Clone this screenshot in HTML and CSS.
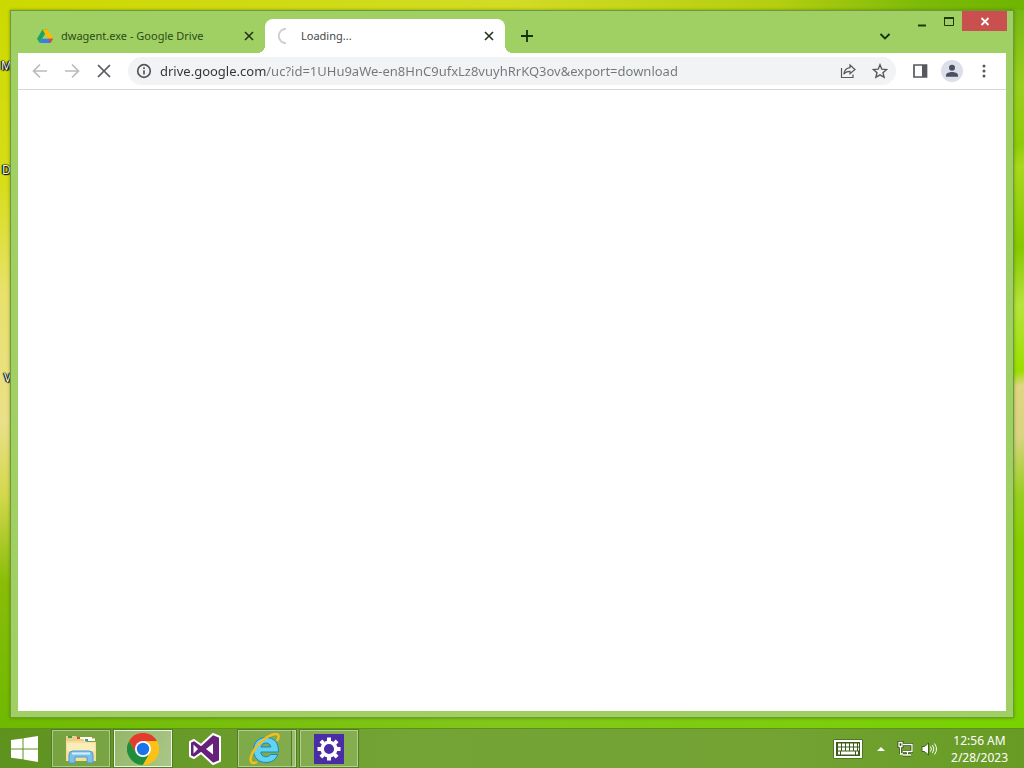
FILE: index.html
```
<!DOCTYPE html>
<html lang="en">
<head>
  <meta charset="UTF-8">
  <meta name="viewport" content="width=device-width, initial-scale=1.0">
  <title>Loading...</title>
  <link rel="stylesheet" href="styles.css">
</head>
<body>
  <main class="desktop">
    <span class="desktop-label label-one">M</span>
    <span class="desktop-label label-two">D</span>
    <span class="desktop-label label-three">V</span>

    <section class="window">
      <header class="title-bar">
        <div class="tab">
          <svg class="favicon" viewBox="0 0 16 16">
            <path d="M5.5 1.5h5L5.2 10.7 2.7 15 0 10.7z" fill="#1ea362"/>
            <path d="M5.5 1.5h5L16 10.7h-5z" fill="#ffba00"/>
            <path d="M2.7 15l2.5-4.3H16L13.4 15z" fill="#3b7de8"/>
            <path d="M13 10.7h3L13.4 15l-2-4.3z" fill="#ea4335"/>
          </svg>
          <span class="tab-title">dwagent.exe - Google Drive</span>
          <button class="tab-close" aria-label="Close tab">
            <svg viewBox="0 0 16 16"><path d="M4 4l8 8M12 4l-8 8"/></svg>
          </button>
        </div>
        <div class="tab tab-active">
          <svg class="favicon" viewBox="0 0 16 16">
            <path d="M9 .8A7.2 7.2 0 0 0 9 15.2" fill="none" stroke="#ccd0d4" stroke-width="2"/>
          </svg>
          <span class="tab-title">Loading...</span>
          <button class="tab-close" aria-label="Close tab">
            <svg viewBox="0 0 16 16"><path d="M4 4l8 8M12 4l-8 8"/></svg>
          </button>
        </div>
        <button class="new-tab" aria-label="New tab">
          <svg viewBox="0 0 16 16"><path d="M8 2v12M2 8h12"/></svg>
        </button>
        <button class="tab-search" aria-label="Search tabs">
          <svg viewBox="0 0 16 16"><path d="M3.5 6l4.5 4.5L12.500 6"/></svg>
        </button>
        <div class="window-buttons">
          <button aria-label="Minimize">
            <svg viewBox="0 0 16 16"><path d="M4 11.500h8v2H4z" fill="#1f3a0a"/></svg>
          </button>
          <button aria-label="Maximize">
            <svg viewBox="0 0 16 16"><path d="M3.500 5.500h9v7h-9z" fill="none" stroke="#1f3a0a"/><path d="M3 4h10v2H3z" fill="#1f3a0a"/></svg>
          </button>
          <button class="window-close" aria-label="Close">
            <svg viewBox="0 0 16 16"><path d="M4.500 5l7 7M11.500 5l-7 7" fill="none" stroke="#fff" stroke-width="1.800"/></svg>
          </button>
        </div>
      </header>

      <nav class="toolbar">
        <button class="nav-btn nav-off" aria-label="Back">
          <svg viewBox="0 0 16 16"><path d="M15 8H2M8 1.500L1.500 8 8 14.500"/></svg>
        </button>
        <button class="nav-btn nav-off" aria-label="Forward">
          <svg viewBox="0 0 16 16"><path d="M1 8h13M8 1.500L14.500 8 8 14.500"/></svg>
        </button>
        <button class="nav-btn" aria-label="Stop">
          <svg viewBox="0 0 16 16"><path d="M2 2l12 12M14 2L2 14"/></svg>
        </button>
        <div class="address-bar">
          <button class="bar-btn" aria-label="Site information">
            <svg viewBox="0 0 16 16"><circle cx="8" cy="8" r="6.300"/><path d="M8 7.200v4.300M8 4.300v1.600"/></svg>
          </button>
          <input class="address" type="text" aria-label="Address" spellcheck="false" value="drive.google.com/uc?id=1UHu9aWe-en8HnC9ufxLz8vuyhRrKQ3ov&amp;export=download">
          <button class="bar-btn" aria-label="Share">
            <svg class="thin" viewBox="0 0 16 16"><path d="M1.500 5v9.500h11.500v-3M10 2l5 4.500-5 4.300V8.300C7 8.300 5 9.200 3.800 11.300 4.300 7.500 6.500 5 10 4.700z"/></svg>
          </button>
          <button class="bar-btn" aria-label="Bookmark">
            <svg class="star" viewBox="0 0 16 16"><path d="M8 1.800l1.800 4.400 4.800.4-3.600 3.100 1.100 4.700L8 11.900l-4.100 2.500L5 9.700 1.400 6.600l4.800-.4z"/></svg>
          </button>
        </div>
        <button class="bar-btn" aria-label="Side panel">
          <svg viewBox="0 0 16 16"><path d="M2 2h12.500v12H2z"/><path d="M10 2h4.500v12H10z" fill="#55585d" stroke="none"/></svg>
        </button>
        <button class="profile" aria-label="Profile">
          <svg viewBox="0 0 22 22"><circle cx="11" cy="7.800" r="3" fill="#4a4f63"/><path d="M5 16.800v-1.600c0-2 3.500-3.200 6-3.200s6 1.200 6 3.200v1.600z" fill="#4a4f63"/></svg>
        </button>
        <button class="bar-btn" aria-label="Menu">
          <svg viewBox="0 0 16 16"><g fill="#55585d" stroke="none"><circle cx="8" cy="3" r="1.500"/><circle cx="8" cy="8" r="1.500"/><circle cx="8" cy="13" r="1.500"/></g></svg>
        </button>
      </nav>

      <div class="page"></div>
    </section>
  </main>

  <footer class="taskbar">
    <button class="start" aria-label="Start">
      <svg viewBox="0 0 28 26"><path d="M0 4l11.500-1.600v10H0zM12.500 2.200L27 0v12.400H12.500zM0 13.400h11.500v9.800L0 21.700zM12.500 13.400H27V26l-14.500-2.400z" fill="#fff"/></svg>
    </button>
    <div class="tasks">
      <button class="task task-open" aria-label="File Explorer">
        <svg viewBox="0 0 32 32">
          <path d="M1 6V3h10l2 2h17v3H1z" fill="#e9cf87"/>
          <path d="M3 3h4v2H3z" fill="#3e9b4a"/>
          <path d="M12 4h15v2H12z" fill="#fffbe8"/>
          <path d="M12 4h3v2h-3z" fill="#d64c35"/>
          <path d="M19 6h11v2H19z" fill="#fffdf5"/>
          <path d="M20 6h3v2h-3z" fill="#408ccc"/>
          <path d="M1 8h19l2 1h9v19H1z" fill="#f6df98"/>
          <path d="M2 10h28v8H2z" fill="#fbedb9"/>
          <path d="M4 30V22q0-4 4-4h16q4 0 4 4v8h-6v-6H10v6z" fill="#7fc0e9" stroke="#4a9bd4"/>
          <path d="M7 20.500h18" stroke="#d5f0fc" stroke-width="2"/>
        </svg>
      </button>
      <button class="task task-open task-current" aria-label="Google Chrome">
        <svg viewBox="0 0 32 32">
          <circle cx="16" cy="16" r="16" fill="#fbc116"/>
          <path d="M2.100 8A16 16 0 0 1 29.900 8H16l-6.900 12z" fill="#e33b2e"/>
          <path d="M2.100 8A16 16 0 0 0 16 32l6.900-12-6.900 4-6.900-4z" fill="#1e8e3e"/>
          <path d="M16 8h13.900A16 16 0 0 1 16 32l6.900-12z" fill="#fbc116"/>
          <circle cx="16" cy="16" r="8" fill="#fff"/>
          <circle cx="16" cy="16" r="6.200" fill="#1a73e8"/>
        </svg>
      </button>
      <button class="task" aria-label="Visual Studio">
        <svg viewBox="0 0 32 32">
          <path d="M1 9l4-2 7 5L24 1l7 3v24l-7 3-12-11-7 5-4-2z" fill="#68217a" stroke="#fff" stroke-width="2" stroke-linejoin="round"/>
          <path d="M4.500 11.500L9 16l-4.500 4.500zM24 10.500v11L17 16z" fill="#fff"/>
        </svg>
      </button>
      <button class="task task-open task-stack" aria-label="Internet Explorer">
        <svg viewBox="0 0 32 32">
          <path d="M17 4.500C9.500 4.500 4.500 9.500 4.500 17S9.500 29.500 17 29.500c6 0 10-3 11.800-8h-7.300c-1 1.500-2.500 2.300-4.500 2.300-3 0-5-1.800-5.200-4.800h17.600C30 10.500 25.500 4.500 17 4.500zM12 14c.5-2.500 2.300-4 5-4s4.500 1.500 4.800 4z" fill="#62d3f3" stroke="#1689be"/>
          <path d="M8 29C2 32 0 28 3 21 7 12 18 2 26 1c5-.5 4 4 2 7" fill="none" stroke="#f6bc23" stroke-width="2.500"/>
        </svg>
      </button>
      <button class="task task-open" aria-label="Settings">
        <svg viewBox="0 0 32 32">
          <path d="M1 1h30v30H1z" fill="#4a2da6"/>
          <g stroke="#fff" fill="none"><circle cx="16" cy="16" r="6.800" stroke-width="3.500"/><path d="M16 4.500V8M16 24v3.500M4.500 16H8M24 16h3.500M7.900 7.900l2.400 2.400M21.700 21.700l2.400 2.400M24.100 7.900l-2.400 2.400M10.300 21.700l-2.400 2.400" stroke-width="4"/></g>
        </svg>
      </button>
    </div>
    <div class="tray">
      <button class="tray-keyboard" aria-label="Touch keyboard">
        <svg viewBox="0 0 30 20">
          <path d="M.5.500h29v19H.5z" fill="#2f4d12"/>
          <path d="M2 2h26v16H2z" fill="#3c5a18" stroke="#fff" stroke-width="2"/>
          <path d="M5 6h21M5 10h21" stroke="#fff" stroke-width="3" stroke-dasharray="3 1"/>
          <path d="M5 14h2M8 14h14M23 14h2" stroke="#fff" stroke-width="3"/>
        </svg>
      </button>
      <button class="tray-icon" aria-label="Show hidden icons">
        <svg viewBox="0 0 16 16"><path d="M4 10l4-4 4 4z" fill="#fff"/></svg>
      </button>
      <button class="tray-icon" aria-label="Network">
        <svg viewBox="0 0 16 16"><g fill="none" stroke="#2f4d12" stroke-width="3"><path d="M6 3.500h9v7H6M10.500 11v3M6 14h8M2 1.500h3v4H2zM3.500 6v7"/></g><g fill="none" stroke="#fff" stroke-width="1.300"><path d="M6 3.500h9v7H6M10.500 11v3M6 14h8M2 1.500h3v4H2zM3.500 6v7H6"/></g></svg>
      </button>
      <button class="tray-icon" aria-label="Volume">
        <svg viewBox="0 0 16 16"><path d="M1 5.500h2.500L7.500 2v12l-4-3.500H1z" fill="#fff" stroke="#3f611a"/><path d="M9.500 5.500q1.800 2.500 0 5M11.500 4q2.800 4 0 8M13.500 2.500q4 5.500 0 11" fill="none" stroke="#fff"/></svg>
      </button>
      <button class="clock">
        <time>12:56 AM</time>
        <time>2/28/2023</time>
      </button>
    </div>
  </footer>
</body>
</html>
```

FILE: styles.css
```
* {
  box-sizing: border-box;
}

body {
  margin: 0;
  height: 100vh;
  display: flex;
  flex-direction: column;
  overflow: hidden;
  font-family: "Segoe UI", "Noto Sans", "Open Sans", sans-serif;
  font-size: 12px;
}

button {
  padding: 0;
  border: none;
  background: none;
  font: inherit;
  display: flex;
  align-items: center;
  justify-content: center;
  flex-shrink: 0;
}

svg {
  display: block;
  width: 16px;
  height: 16px;
}

/* Desktop and wallpaper */
.desktop {
  position: relative;
  flex: 1;
  min-height: 0;
  display: flex;
  padding: 10px 10px 10px;
  background:
    linear-gradient(100deg, #ccd900 0%, #d2dc24 50%, #b4ce10 76%, #7cba08 90%, #6fb500 100%) top / 100% 10px no-repeat,
    linear-gradient(90deg, #6fb900, #82c71a 50%, #78d200) bottom / 100% 11px no-repeat,
    linear-gradient(180deg, #ccd900, #d6de18 25%, #e8e16a 40%, #e9e089 58%, #d3d84c 68%, #89bd08 80%, #6fb900) left / 11px 100% no-repeat,
    linear-gradient(165deg, #72b510, #9ace1c 12%, #8fcc08 20%, #a9d81c 23%, #86c800 34%, #b6e43a 42%, #9bdf00 51%, #dfd583 53%, #d8d480 60%, #98cf1e 68%, #86cc00 75%, #78d200) right / 11px 100% no-repeat;
}

.desktop-label {
  position: absolute;
  color: #fff;
  font-size: 12px;
  line-height: 16px;
  text-shadow: 0 0 1px #000, 0 0 2px #000, 1px 1px 1px #000, -1px 0 1px #000, 0 0 1px #000;
}

.label-one {
  left: 1px;
  top: 58px;
}

.label-two {
  left: 2px;
  top: 162px;
}

.label-three {
  left: 4px;
  top: 370px;
}

/* Browser window */
.window {
  position: relative;
  flex: 1;
  min-width: 0;
  display: flex;
  flex-direction: column;
  padding: 0 7px 6px;
  border: 1px solid #6f9a3c;
  background: #a0d063;
  box-shadow: 0 0 3px rgba(50, 90, 0, 0.5);
}

.title-bar {
  display: flex;
  align-items: flex-end;
  height: 42px;
  padding-left: 7px;
}

.tab {
  display: flex;
  align-items: center;
  width: 240px;
  height: 34px;
  padding: 0 8px 0 12px;
  color: #2d4a1a;
}

.tab-active {
  position: relative;
  background: #fff;
  border-radius: 8px 8px 0 0;
  color: #45494d;
}

/* Flared feet of the active tab */
.tab-active::before,
.tab-active::after {
  content: "";
  position: absolute;
  bottom: 0;
  width: 8px;
  height: 8px;
}

.tab-active::before {
  right: 100%;
  background: radial-gradient(circle at 0 0, transparent 8px, #fff 8px);
}

.tab-active::after {
  left: 100%;
  background: radial-gradient(circle at 100% 0, transparent 8px, #fff 8px);
}

.tab-title {
  flex: 1;
  margin-left: 8px;
  padding-bottom: 2px;
  font-size: 11px;
  white-space: nowrap;
}

.tab-close svg {
  fill: none;
  stroke: #24331a;
  stroke-width: 1.6;
}

.new-tab,
.tab-search {
  height: 34px;
}

.new-tab {
  margin-left: 14px;
}

.new-tab svg,
.tab-search svg {
  fill: none;
  stroke: #16300a;
  stroke-width: 1.8;
}

.tab-search {
  margin-left: auto;
}

.window-buttons {
  display: flex;
  align-self: flex-start;
  margin-left: 15px;
  margin-right: -1px;
}

.window-buttons button {
  width: 27px;
  height: 20px;
}

.window-buttons .window-close {
  width: 45px;
  background: #c9504f;
}

.toolbar {
  display: flex;
  align-items: center;
  gap: 16px;
  height: 37px;
  padding: 0 14px;
  background: #fff;
  border-bottom: 1px solid #d5d7d9;
}

.nav-btn svg,
.bar-btn svg {
  fill: none;
  stroke: #55585d;
  stroke-width: 1.7;
}

.nav-off svg {
  stroke: #b9bbbe;
}

.bar-btn .thin {
  stroke-width: 1.2;
}

.bar-btn .star {
  stroke-width: 1.4;
}

.address-bar {
  flex: 1;
  min-width: 0;
  display: flex;
  align-items: center;
  gap: 16px;
  height: 28px;
  padding: 0 8px;
  border-radius: 14px;
  background: #f1f3f4;
}

/* The host is dark, the rest of the address is grey */
.address {
  flex: 1;
  min-width: 0;
  margin-left: -8px;
  padding: 0;
  border: none;
  outline: none;
  font-family: inherit;
  font-size: 13px;
  color: transparent;
  background: linear-gradient(90deg, #303337 106px, #73777b 106px);
  background-clip: text;
  -webkit-background-clip: text;
}

.profile {
  width: 22px;
  height: 22px;
  margin: 0 -3px;
  border-radius: 50%;
  background: #dcdfe8;
}

.profile svg {
  width: 22px;
  height: 22px;
}

.page {
  flex: 1;
  background: #fff;
}

/* Taskbar */
.taskbar {
  display: flex;
  height: 40px;
  border-top: 1px solid #5c9317;
  background: linear-gradient(90deg, #5e921f, #74a336 40%, #74a334 75%, #679b24);
}

.start {
  width: 50px;
}

.start svg {
  width: 28px;
  height: 26px;
}

.tasks {
  display: flex;
  gap: 2px;
  padding-left: 1px;
}

.task {
  width: 60px;
  height: 39px;
  border: 1px solid transparent;
}

.task svg {
  width: 32px;
  height: 32px;
}

.task-open {
  border-color: #527d24;
  background: rgba(255, 255, 255, 0.14);
  box-shadow: inset 0 0 0 1px rgba(255, 255, 255, 0.4);
}

.task-current {
  background: linear-gradient(120deg, rgba(255, 255, 255, 0.3), rgba(255, 255, 255, 0.45));
  box-shadow: inset 0 0 0 1px rgba(255, 255, 255, 0.8);
}

/* Second edge for an app with more than one window */
.task-stack {
  padding-right: 5px;
  background: linear-gradient(90deg, transparent 53px, #527d24 53px, #527d24 54px, rgba(255, 255, 255, 0.2) 54px), rgba(255, 255, 255, 0.14);
}

.tray {
  display: flex;
  align-items: center;
  margin-left: auto;
  padding-right: 16px;
  color: #fff;
}

.tray-keyboard {
  margin-right: 6px;
}

.tray-keyboard svg {
  width: 30px;
  height: 20px;
}

.tray-icon {
  width: 24px;
}

.clock {
  flex-direction: column;
  margin-left: 10px;
  color: #fff;
  font-size: 12px;
  line-height: 17px;
}
```
